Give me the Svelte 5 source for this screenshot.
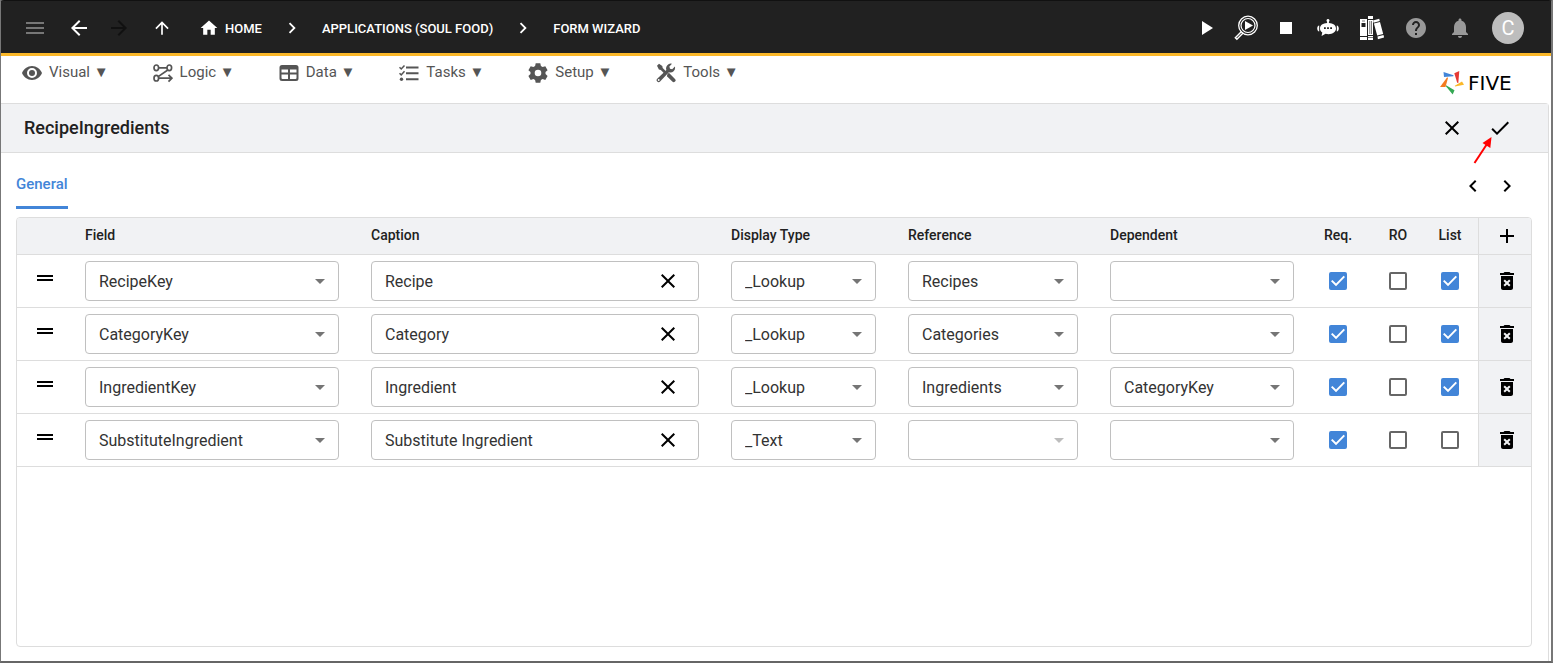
<script>
  const crumbs = ["APPLICATIONS (SOUL FOOD)", "FORM WIZARD"]

  const menus = [
    { id: "visual", label: "Visual" },
    { id: "logic", label: "Logic" },
    { id: "data", label: "Data" },
    { id: "tasks", label: "Tasks" },
    { id: "setup", label: "Setup" },
    { id: "tools", label: "Tools" },
  ]

  const paths = {
    menu: "M3 18h18v-2H3v2zm0-5h18v-2H3v2zm0-7v2h18V6H3z",
    back: "M20 11H7.83l5.59-5.59L12 4l-8 8 8 8 1.41-1.41L7.83 13H20v-2z",
    forward: "M12 4l-1.41 1.41L16.17 11H4v2h12.17l-5.58 5.59L12 20l8-8z",
    up: "M4 12l1.41 1.41L11 7.83V20h2V7.83l5.58 5.59L20 12l-8-8-8 8z",
    home: "M10 20v-6h4v6h5v-8h3L12 3 2 12h3v8z",
    right: "M10 6L8.59 7.41 13.17 12l-4.58 4.59L10 18l6-6z",
    left: "M15.41 7.41L14 6l-6 6 6 6 1.41-1.41L10.83 12z",
    play: "M8 5v14l11-7z",
    stop: "M6 6h12v12H6z",
    help: "M12 2C6.48 2 2 6.48 2 12s4.48 10 10 10 10-4.48 10-10S17.52 2 12 2zm1 17h-2v-2h2v2zm2.07-7.75l-.9.92C13.45 12.9 13 13.5 13 15h-2v-.5c0-1.1.45-2.1 1.17-2.83l1.24-1.26c.37-.36.59-.86.59-1.41 0-1.1-.9-2-2-2s-2 .9-2 2H8c0-2.21 1.79-4 4-4s4 1.79 4 4c0 .88-.36 1.68-.93 2.25z",
    bell: "M12 22c1.1 0 2-.9 2-2h-4c0 1.1.89 2 2 2zm6-6v-5c0-3.07-1.64-5.64-4.5-6.32V4c0-.83-.67-1.5-1.5-1.5s-1.5.67-1.5 1.5v.68C7.63 5.36 6 7.92 6 11v5l-2 2v1h16v-1l-2-2z",
    close: "M19 6.41L17.59 5 12 10.59 6.41 5 5 6.41 10.59 12 5 17.59 6.41 19 12 13.41 17.59 19 19 17.59 13.41 12z",
    check: "M9 16.17L4.83 12l-1.42 1.41L9 19 21 7l-1.41-1.41z",
    add: "M19 13h-6v6h-2v-6H5v-2h6V5h2v6h6v2z",
    drag: "M20 9H4v2h16V9zM4 15h16v-2H4v2z",
    trash: "M6 19c0 1.1.9 2 2 2h8c1.1 0 2-.9 2-2V7H6v12zm2.46-7.12l1.41-1.41L12 12.59l2.12-2.12 1.41 1.41L13.41 14l2.12 2.12-1.41 1.41L12 15.41l-2.12 2.12-1.41-1.41L10.59 14l-2.13-2.12zM15.5 4l-1-1h-5l-1 1H5v2h14V4z",
    down: "M7 10l5 5 5-5z",
  }

  let rows = $state([
    { field: "RecipeKey", caption: "Recipe", type: "_Lookup", reference: "Recipes", dependent: "", req: true, ro: false, list: true },
    { field: "CategoryKey", caption: "Category", type: "_Lookup", reference: "Categories", dependent: "", req: true, ro: false, list: true },
    { field: "IngredientKey", caption: "Ingredient", type: "_Lookup", reference: "Ingredients", dependent: "CategoryKey", req: true, ro: false, list: true },
    { field: "SubstituteIngredient", caption: "Substitute Ingredient", type: "_Text", reference: "", dependent: "", req: true, ro: false, list: false },
  ])

  const fields = ["RecipeKey", "CategoryKey", "IngredientKey", "SubstituteIngredient"]
  const types = ["_Lookup", "_Text"]
  const references = ["", "Recipes", "Categories", "Ingredients"]
  const dependents = ["", ...fields]

  function addRow() {
    rows.push({ field: fields[0], caption: "", type: "_Text", reference: "", dependent: "", req: false, ro: false, list: false })
  }
</script>

{#snippet icon(name, size = 24)}
  <svg width={size} height={size} viewBox="0 0 24 24" fill="currentColor" aria-hidden="true">
    <path d={paths[name]} />
  </svg>
{/snippet}

{#snippet menuIcon(id)}
  <svg width="20" height="20" viewBox="0 0 20 20" fill="currentColor" aria-hidden="true">
    {#if id == "visual"}
      <path fill-rule="evenodd" d="M10 3C5.500 3 1.600 5.900 0 10c1.600 4.100 5.500 7 10 7s8.400-2.900 10-7c-1.600-4.100-5.500-7-10-7zm0 12a5 5 0 1 1 0-10 5 5 0 0 1 0 10z" />
      <circle cx="10" cy="10" r="3" />
    {:else if id == "logic"}
      <g fill="none" stroke="currentColor" stroke-width="1.700">
        <ellipse cx="3.300" cy="4.800" rx="2.300" ry="2.800" />
        <ellipse cx="16.300" cy="4.800" rx="2.300" ry="2.800" />
        <ellipse cx="3.300" cy="15.200" rx="2.300" ry="2.800" />
        <path d="M5.600 4.800H14M14.800 7L5.200 13.600M5.600 15.200h13M15.500 11.800l3.400 3.400-3.400 3.400" />
      </g>
    {:else if id == "data"}
      <path fill-rule="evenodd" d="M3 2h14a2.500 2.500 0 0 1 2.500 2.500v11A2.500 2.500 0 0 1 17 18H3a2.500 2.500 0 0 1-2.500-2.500v-11A2.500 2.500 0 0 1 3 2zM2.500 6.500v3H9v-3zM11 6.500v3h6.500v-3zM2.500 11.500V15a1 1 0 0 0 1 1H9v-4.500zM11 11.500V16h5.500a1 1 0 0 0 1-1v-3.500z" />
    {:else if id == "tasks"}
      <path d="M7 3.500h12.500v2H7zM7 9.200h12.500v2H7zM7 15.200h12.500v2H7z" />
      <circle cx="2.500" cy="16.200" r="1.700" />
      <path d="M.5 4.300l1.700 1.700 3.300-3.600M.5 10.200l1.700 1.700 3.300-3.600" fill="none" stroke="currentColor" stroke-width="1.500" />
    {:else if id == "setup"}
      <path fill-rule="evenodd" d="M7.700.3h4.600l.6 2.800 1.700 1 2.700-.9 2.300 4-2.100 1.900v1.900l2.100 1.900-2.300 4-2.700-.9-1.700 1-.6 2.700H7.700l-.6-2.700-1.700-1-2.700.9-2.300-4L2.500 11V9.100L.4 7.200l2.300-4 2.700.9 1.700-1zM10 6.700a3.300 3.300 0 1 0 0 6.600 3.300 3.300 0 0 0 0-6.600z" />
    {:else}
      <path d="M1 2.700L3 .8l3.300 2.300.4 2 4 4-1.900 1.900-4-4-1.900-.4z" />
      <path d="M11.600 10.500l1.500-.5 5.900 5.900a1.800 1.800 0 0 1-2.700 2.700l-5.400-5.400z" />
      <path fill-rule="evenodd" d="M18.900 3.600a4.700 4.700 0 0 1-6 5.700l-8.800 9.200a2 2 0 0 1-2.900-2.800L10.400 7A4.700 4.700 0 0 1 16 .8l-2.600 2.800.6 2.200 2.200.5zM2.700 16.100a.9.900 0 1 0 0 1.800.9.900 0 0 0 0-1.800z" />
    {/if}
  </svg>
{/snippet}

{#snippet dropdown(row, key, options, label, disabled = false)}
  <div class="select">
    <select aria-label={label} bind:value={row[key]} {disabled}>
      {#each options as option}
        <option value={option}>{option}</option>
      {/each}
    </select>
    {@render icon("down")}
  </div>
{/snippet}

<div class="window">
  <header>
    <button class="muted" aria-label="Menu">{@render icon("menu")}</button>
    <div class="history">
      <button aria-label="Back">{@render icon("back")}</button>
      <button class="off" aria-label="Forward" disabled>{@render icon("forward")}</button>
    </div>
    <button aria-label="Up">{@render icon("up", 20)}</button>

    <nav class="crumbs">
      <a href="#home">{@render icon("home", 20)}HOME</a>
      {#each crumbs as crumb}
        {@render icon("right", 22)}
        <a href="#crumb">{crumb}</a>
      {/each}
    </nav>

    <div class="run">
      <button aria-label="Run">{@render icon("play")}</button>
      <button aria-label="Inspect">
        <svg width="24" height="26" viewBox="0 0 24 26" fill="none" stroke="currentColor" aria-hidden="true">
          <circle cx="14" cy="10.500" r="9.300" stroke-width="1.300" />
          <circle cx="14" cy="10.500" r="7" stroke-width="1.200" />
          <path d="M7.500 16.500L1.300 22.700l1.600 1.600 6.200-6.200" stroke-width="1.400" />
          <path d="M11 6v9l8-4.500z" fill="currentColor" stroke="none" />
        </svg>
      </button>
      <button aria-label="Stop">{@render icon("stop")}</button>
    </div>
    <div class="tools">
      <button aria-label="Assistant">
        <svg width="22" height="18" viewBox="0 0 22 18" fill="currentColor" aria-hidden="true">
          <path fill-rule="evenodd" d="M11 0a1.500 1.500 0 0 1 .9 2.700V4C16 4.200 19 6.200 19 9.500c0 3.400-3.200 5.700-7.500 5.700-1 0-2-.1-2.900-.4L4.500 17l.8-3.600C3.800 12.500 3 11.100 3 9.500 3 6.200 6 4.200 10.100 4V2.700A1.500 1.500 0 0 1 11 0zM7 8.200v1.800h1.800V8.200zM10.100 8.200v1.800h1.800V8.200zM13.200 8.200v1.800H15V8.200z" />
          <path d="M2.200 6.500v6C.9 12.300.2 11 .2 9.500s.7-2.800 2-3zM19.800 6.500v6c1.300-.2 2-1.500 2-3s-.7-2.800-2-3z" />
        </svg>
      </button>
      <button aria-label="Library">
        <svg width="24" height="24" viewBox="0 0 24 24" fill="currentColor" aria-hidden="true">
          <path fill-rule="evenodd" d="M0 3h7v17H0zM1.500 7v4h4V7zM0 21h7v3H0zM8 0h5v3H8zM8 4h5v15H8zM8 20h5v4H8z" />
          <path d="M13 4.500l6.200-1.700.6 2.200-6.200 1.700zM13.900 7.600L20 5.900l3.200 12-6 1.700zM17.500 20.600l6-1.700.6 2.600-6.200 1.700z" />
          <path d="M2 5h3M9.800 5v13M11.500 5v13M8 21.500h5" stroke="#777" fill="none" />
        </svg>
      </button>
      <button class="dim" aria-label="Help">{@render icon("help")}</button>
      <button class="dim" aria-label="Notifications">{@render icon("bell")}</button>
      <button class="account" aria-label="Account"><span class="avatar">C</span></button>
    </div>
  </header>

  <div class="menubar">
    {#each menus as menu}
      <button>
        {@render menuIcon(menu.id)}
        <span>{menu.label} ▼</span>
      </button>
    {/each}
    <div class="logo">
      <svg width="24" height="24" viewBox="0 0 24 24" aria-hidden="true">
        <path fill="#4285d8" d="M3.500 1l10 3.200-.2 1L4 6z" />
        <path fill="#e53935" d="M14.300 2.200L19.300 0l-1 12-1.100-.2z" />
        <path fill="#fbb829" d="M14.800 14.800l7.200-4.300 2 3.300-9 1.800z" />
        <path fill="#34a853" d="M6 14.300l8.500 5-1.800 4.200-7-8.400z" />
        <path fill="#f47b20" d="M7.200 6.300l.8.600-2.500 9.200L0 16z" />
      </svg>
      <span>FIVE</span>
    </div>
  </div>

  <main>
    <div class="titlebar">
      <h1>RecipeIngredients</h1>
      <button aria-label="Cancel">{@render icon("close")}</button>
      <button class="save" aria-label="Save">
        {@render icon("check")}
        <svg class="pointer" width="20" height="28" viewBox="0 0 20 28" aria-hidden="true">
          <path d="M1.500 27L14 8" stroke="#f00" stroke-width="2" />
          <path d="M18.500 1l-1.200 11-7.800-5z" fill="#f00" />
        </svg>
      </button>
    </div>

    <div class="tabs">
      <button class="tab">General</button>
      <div class="pager">
        <button aria-label="Previous">{@render icon("left")}</button>
        <button aria-label="Next">{@render icon("right")}</button>
      </div>
    </div>

    <div class="grid">
      <table>
        <colgroup>
          <col class="c-drag" />
          <col class="c-field" />
          <col />
          <col class="c-type" />
          <col class="c-ref" />
          <col class="c-dep" />
          <col class="c-req" />
          <col class="c-ro" />
          <col class="c-list" />
          <col class="c-action" />
        </colgroup>
        <thead>
          <tr>
            <th></th>
            <th>Field</th>
            <th>Caption</th>
            <th>Display Type</th>
            <th>Reference</th>
            <th>Dependent</th>
            <th class="flag">Req.</th>
            <th class="flag">RO</th>
            <th class="flag list">List</th>
            <th class="action"><button aria-label="Add row" onclick={addRow}>{@render icon("add")}</button></th>
          </tr>
        </thead>
        <tbody>
          {#each rows as row, i}
            <tr>
              <td class="drag">{@render icon("drag")}</td>
              <td>{@render dropdown(row, "field", fields, "Field")}</td>
              <td>
                <div class="caption">
                  <input type="text" aria-label="Caption" bind:value={row.caption} />
                  <button aria-label="Clear caption" onclick={() => (row.caption = "")}>{@render icon("close")}</button>
                </div>
              </td>
              <td>{@render dropdown(row, "type", types, "Display Type")}</td>
              <td>{@render dropdown(row, "reference", references, "Reference", row.type == "_Text")}</td>
              <td>{@render dropdown(row, "dependent", dependents, "Dependent")}</td>
              <td class="flag"><input type="checkbox" aria-label="Required" bind:checked={row.req} /></td>
              <td class="flag"><input type="checkbox" aria-label="Read only" bind:checked={row.ro} /></td>
              <td class="flag list"><input type="checkbox" aria-label="List" bind:checked={row.list} /></td>
              <td class="action">
                <button aria-label="Delete row" onclick={() => rows.splice(i, 1)}>{@render icon("trash")}</button>
              </td>
            </tr>
          {/each}
        </tbody>
      </table>
    </div>
  </main>
</div>

<style>
  :global(body) {
    background-color: #777;
  }
  .window {
    box-sizing: border-box;
    min-height: 100vh;
    display: flex;
    flex-direction: column;
    border: 1px solid #777;
    border-top-color: #111;
    border-right-width: 2px;
    border-bottom: 2px solid #666;
    border-radius: 4px 4px 0 0;
    background-color: white;
    font-family: Roboto, "Liberation Sans", sans-serif;
    color: #212121;
  }
  button {
    display: flex;
    align-items: center;
    justify-content: center;
    padding: 0;
    border: none;
    background: none;
    color: inherit;
    font: inherit;
    cursor: pointer;
  }
  svg {
    display: block;
    flex: none;
  }

  /* app bar */

  header {
    display: flex;
    align-items: center;
    height: 52px;
    padding: 2px 19px 0 14px;
    box-sizing: border-box;
    background-color: #212121;
    color: white;
    box-shadow: 0 3px 0 #fbb829;
    margin-bottom: 3px;
  }
  header button {
    width: 40px;
    height: 40px;
  }
  header .account {
    width: 48px;
  }
  header .muted {
    color: #777;
  }
  header .off {
    color: #111;
  }
  header .dim {
    color: #999;
  }
  .history,
  .run,
  .tools {
    display: flex;
  }
  .history {
    margin: 0 3px 0 4px;
  }
  .tools {
    gap: 4px;
    margin-left: 2px;
  }
  .crumbs {
    display: flex;
    align-items: center;
    gap: 19px;
    margin-left: 17px;
    margin-right: auto;
    font-size: 13px;
    font-weight: 500;
  }
  .crumbs a {
    display: flex;
    align-items: center;
    gap: 6px;
    color: inherit;
    text-decoration: none;
  }
  .avatar {
    width: 32px;
    height: 32px;
    border-radius: 50%;
    background-color: #bdbdbd;
    font-size: 20px;
    line-height: 32px;
  }

  /* menu bar */

  .menubar {
    display: flex;
    align-items: flex-start;
    gap: 44px;
    height: 47px;
    padding: 0 22px 0 21px;
    box-sizing: border-box;
  }
  .menubar button {
    gap: 7px;
    height: 34px;
    color: #555;
    font-size: 15px;
  }
  .menubar button span {
    padding-bottom: 2px;
  }
  .logo {
    display: flex;
    align-items: center;
    gap: 4px;
    width: 89px;
    margin-left: auto;
    padding-top: 15px;
    color: black;
    font: 20px/24px "DejaVu Sans", sans-serif;
  }

  /* form */

  main {
    flex: 1;
    display: flex;
    flex-direction: column;
    margin-right: 2px;
    border-top: 1px solid #ddd;
    border-right: 1px solid #ddd;
    border-top-right-radius: 4px;
  }
  .titlebar {
    display: flex;
    align-items: center;
    height: 48px;
    padding: 0 24px 0 23px;
    background-color: #f1f2f4;
    border-bottom: 1px solid #ddd;
  }
  h1 {
    flex: 1;
    margin: 0;
    padding-bottom: 2px;
    font-size: 18px;
    font-weight: 500;
  }
  .titlebar button {
    width: 48px;
    height: 48px;
    color: black;
  }
  .save {
    position: relative;
  }
  .pointer {
    position: absolute;
    left: -3px;
    top: 32px;
  }

  .tabs {
    display: flex;
    justify-content: space-between;
    align-items: center;
    height: 48px;
    margin: 8px 24px 8px 15px;
  }
  .tab {
    height: 48px;
    box-sizing: border-box;
    border-bottom: 3px solid #4285d8;
    color: #4285d8;
    font-size: 15px;
    font-weight: 500;
  }
  .pager {
    display: flex;
    padding-top: 2px;
  }
  .pager button {
    width: 34px;
    height: 34px;
    color: black;
  }

  /* field grid */

  .grid {
    flex: 1;
    margin: 0 16px 14px 15px;
    border: 1px solid #ddd;
    border-radius: 4px;
    overflow: hidden;
  }
  table {
    width: 100%;
    min-width: 1300px;
    table-layout: fixed;
    border-spacing: 0;
  }
  .c-drag {
    width: 52px;
  }
  .c-field {
    width: 286px;
  }
  .c-type {
    width: 177px;
  }
  .c-ref {
    width: 202px;
  }
  .c-dep {
    width: 216px;
  }
  .c-req {
    width: 56px;
  }
  .c-ro {
    width: 64px;
  }
  .c-list {
    width: 48px;
  }
  .c-action {
    width: 53px;
  }
  th,
  td {
    padding: 6px 16px;
    border-bottom: 1px solid #ddd;
  }
  th {
    height: 34px;
    padding: 0 16px 2px;
    background-color: #f1f2f4;
    font-size: 14px;
    font-weight: 500;
    text-align: left;
  }
  .flag {
    padding-left: 0;
    padding-right: 0;
    text-align: center;
  }
  .list {
    padding-right: 8px;
  }
  .action {
    padding: 0 0 0 4px;
    border-left: 1px solid #ddd;
    background-color: #f1f2f4;
  }
  .action button {
    width: 100%;
    height: 36px;
    color: black;
  }
  .drag {
    padding-bottom: 12px;
    color: black;
  }

  .select {
    display: grid;
    align-items: center;
  }
  .select select,
  .select svg {
    grid-area: 1 / 1;
  }
  .select svg {
    justify-self: end;
    margin-right: 7px;
    color: #757575;
    pointer-events: none;
  }
  select,
  .caption {
    width: 100%;
    height: 40px;
    box-sizing: border-box;
    border: 1px solid #c0c0c0;
    border-radius: 4px;
    background-color: white;
  }
  select,
  .caption input {
    appearance: none;
    padding: 0 13px;
    color: #333;
    font: 16px Roboto, "Liberation Sans", sans-serif;
  }
  select:disabled {
    opacity: 1;
  }
  select:disabled + svg {
    color: #bdbdbd;
  }
  .caption {
    display: flex;
    align-items: center;
    padding-right: 18px;
  }
  .caption input {
    flex: 1;
    min-width: 0;
    border: none;
    outline: none;
    background: none;
  }
  .caption button {
    color: black;
  }

  input[type="checkbox"] {
    appearance: none;
    display: block;
    width: 18px;
    height: 18px;
    margin: 0 auto;
    border: 2px solid #666;
    border-radius: 2px;
  }
  input[type="checkbox"]:checked {
    border-color: #4285d8;
    background-color: #4285d8;
  }
  input[type="checkbox"]:checked::before {
    content: "";
    display: block;
    height: 14px;
    background-color: white;
    clip-path: polygon(0 52%, 10% 42%, 36% 68%, 90% 12%, 100% 22%, 36% 88%);
  }
</style>
